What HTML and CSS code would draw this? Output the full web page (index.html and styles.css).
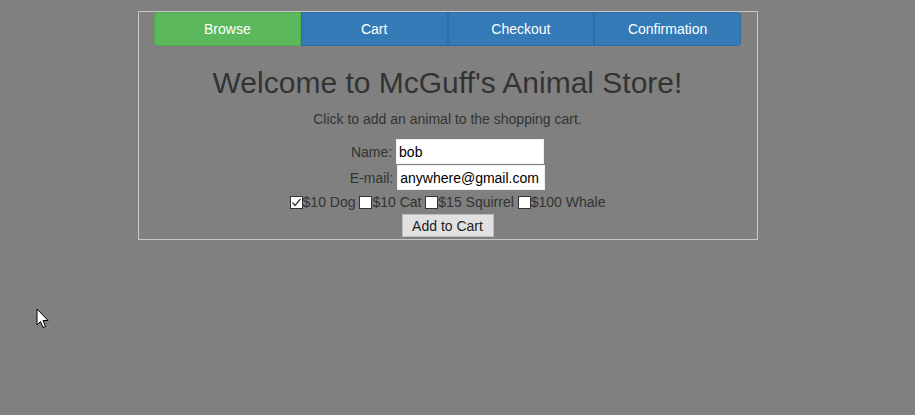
FILE: index.html
```html
<!DOCTYPE html>
<html>
<head>
<meta charset="utf-8">
<link rel="stylesheet" href="styles.css">
</head>
<body>
<div class="store">
  <nav class="steps">
    <div class="step step-active">Browse</div>
    <div class="step">Cart</div>
    <div class="step">Checkout</div>
    <div class="step step-last">Confirmation</div>
  </nav>
  <h1 class="title">Welcome to McGuff's Animal Store!</h1>
  <p class="intro">Click to add an animal to the shopping cart.</p>
  <form class="order">
    <div class="row row-field"><label class="lbl">Name:</label> <input class="field" type="text" value="bob"></div>
    <div class="row row-field"><label class="lbl">E-mail:</label> <input class="field" type="text" value="anywhere@gmail.com"></div>
    <div class="row row-animals">
      <span class="box"><svg width="11" height="11" viewBox="0 0 11 11"><path d="M1.5 5.5 L4 8.5 L9.5 2" fill="none" stroke="#333" stroke-width="1.2"/></svg></span>$10 Dog
      <span class="box"></span>$10 Cat
      <span class="box"></span>$15 Squirrel
      <span class="box"></span>$100 Whale
    </div>
    <div class="row row-button"><button type="button" class="add">Add to Cart</button></div>
  </form>
</div>
<svg class="cursor" width="14" height="22" viewBox="0 0 14 22"><path d="M1 1 L1 17 L4.5 13.5 L7 19.5 L9.5 18.5 L7 12.5 L12 12.5 Z" fill="#fff" stroke="#000" stroke-width="1"/></svg>
</body>
</html>
```
FILE: styles.css
```css
html, body {
  margin: 0;
  padding: 0;
}
body {
  background: #808080;
  font-family: "Liberation Sans", Arial, sans-serif;
  font-size: 14px;
  color: #333;
  width: 915px;
  height: 415px;
  overflow: hidden;
  position: relative;
}
.store {
  box-sizing: border-box;
  width: 620px;
  height: 229px;
  margin: 11px 0 0 138px;
  border: 1px solid #c8c8c8;
  padding: 0 16px 0 15px;
}
.steps {
  display: flex;
  height: 34px;
}
.step {
  flex: 1;
  box-sizing: border-box;
  background: #337ab7;
  border: 1px solid #2e6da4;
  color: #fff;
  text-align: center;
  line-height: 32px;
  font-size: 14px;
}
.step-active {
  background: #5cb85c;
  border-color: #4cae4c;
  border-radius: 4px 0 0 4px;
}
.step-last {
  border-radius: 0 4px 4px 0;
}
.title {
  margin: 20px 0 10px;
  font-size: 30px;
  font-weight: normal;
  line-height: 33px;
  text-align: center;
  color: #333;
}
.intro {
  margin: 0 0 10px;
  line-height: 20px;
  text-align: center;
}
.order {
  margin: 0;
}
.row {
  text-align: center;
}
.row-field {
  height: 26px;
}
.lbl {
  vertical-align: middle;
}
.field {
  box-sizing: border-box;
  width: 148px;
  height: 25px;
  margin: 0;
  padding: 1px 2px;
  border: 1px solid #f0f0f0;
  background: #fff;
  font-family: "Liberation Sans", Arial, sans-serif;
  font-size: 14px;
  color: #000;
  vertical-align: middle;
}
.row-animals {
  height: 22px;
  line-height: 22px;
}
.box {
  display: inline-block;
  box-sizing: border-box;
  width: 13px;
  height: 13px;
  border: 1px solid #333;
  background: #fff;
  vertical-align: -2px;
}
.box svg {
  display: block;
}
.row-button {
  padding-top: 1px;
}
.add {
  box-sizing: border-box;
  width: 92px;
  height: 23px;
  margin: 0;
  padding: 0;
  border: 1px solid #bdbdbd;
  background: #e1e1e1;
  font-family: "Liberation Sans", Arial, sans-serif;
  font-size: 14px;
  color: #222;
}
.cursor {
  position: absolute;
  left: 36px;
  top: 308px;
}
```
